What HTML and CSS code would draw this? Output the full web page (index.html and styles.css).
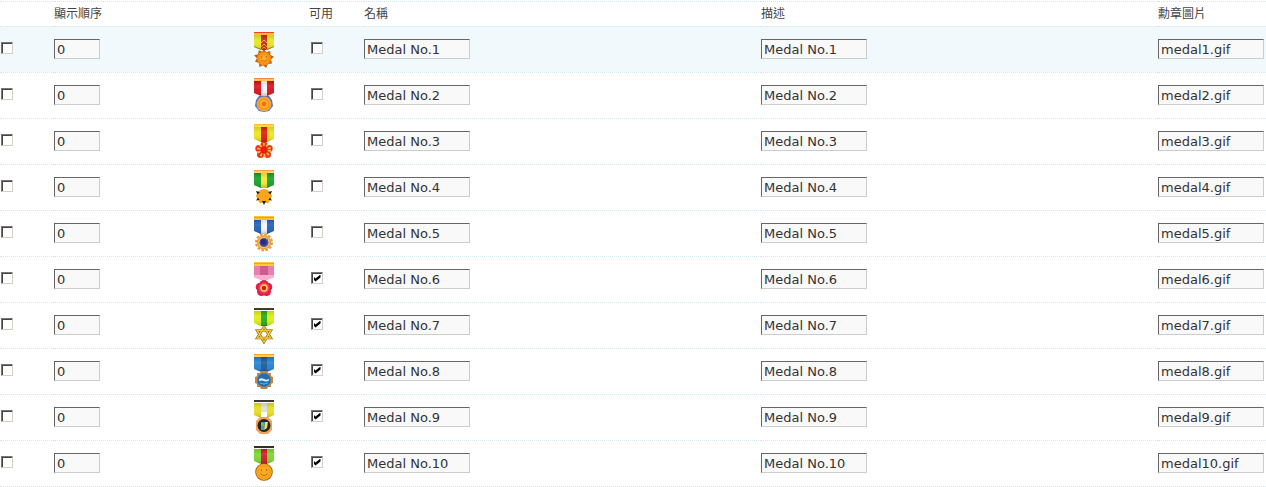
FILE: index.html
```html
<!DOCTYPE html>
<html lang="zh-Hant">
<head>
<meta charset="utf-8">
<title>勳章</title>
<link rel="stylesheet" href="styles.css">
</head>
<body>
<svg class="defs" aria-hidden="true">
  <defs>
    <linearGradient id="shade" x1="0" y1="0" x2="0" y2="1">
      <stop offset="0" stop-color="#000" stop-opacity=".1"/>
      <stop offset=".35" stop-color="#fff" stop-opacity=".12"/>
      <stop offset=".6" stop-color="#fff" stop-opacity=".05"/>
      <stop offset="1" stop-color="#000" stop-opacity=".22"/>
    </linearGradient>
    <radialGradient id="gold"><stop offset="0" stop-color="#ffb52e"/><stop offset="1" stop-color="#f0860c"/></radialGradient>
    <path id="ribbon" d="M0 3H20V15L13 18H7L0 15Z"/>
    <path id="stripe" d="M7 3h6v15H7z"/>
    <path id="burst" d="M10 17l2.400 3.200 3.900-1.200.1 4 3.600 1.800-3 2.800 1 4-4.100.3-1.800 4.100-3-2.700-3.600 1.700-.7-4L1 29.500l1.900-3.300L0 23.300l4-1.100.8-3.900 3.300 1.200z"/>
  </defs>
</svg>
<table class="medals">
  <colgroup><col class="c-check"><col class="c-order"><col class="c-icon"><col class="c-use"><col><col><col class="c-file"></colgroup>
  <thead>
    <tr><th></th><th>顯示順序</th><th></th><th>可用</th><th>名稱</th><th>描述</th><th>勳章圖片</th></tr>
  </thead>
  <tbody>
    <tr class="active">
      <td><input class="check" type="checkbox" aria-label="選擇 1"></td>
      <td><input class="text short" type="text" value="0" aria-label="顯示順序 1"></td>
      <td><svg class="medal" viewBox="0 0 20 36"><use href="#ribbon" fill="#e8e21c"/><path fill="#8f9a12" d="M0 14l7 3v1l-7-3zM20 14l-7 3v1l7-3z"/><use href="#stripe" fill="#cf2412"/><path d="M7 11l3-3 3 3M7 15l3-3 3 3M7 18l3-3 3 3" fill="none" stroke="#f6a83e"/><use href="#ribbon" fill="url(#shade)"/><path fill="#f0402c" d="M0 0h20v1H0z"/><path fill="#ffbf35" d="M0 1h20v2H0z"/><use href="#burst" fill="#bd6112"/><circle cx="10" cy="26.500" r="7" fill="url(#gold)"/><path d="M7.500 24v2M12.500 24v2M7 28q3 3 6 0" fill="none" stroke="#dc720f"/></svg></td>
      <td><input class="check use" type="checkbox" aria-label="可用 1"></td>
      <td><input class="text" type="text" value="Medal No.1" aria-label="名稱 1"></td>
      <td><input class="text" type="text" value="Medal No.1" aria-label="描述 1"></td>
      <td><input class="text" type="text" value="medal1.gif" aria-label="勳章圖片 1"></td>
    </tr>
    <tr>
      <td><input class="check" type="checkbox" aria-label="選擇 2"></td>
      <td><input class="text short" type="text" value="0" aria-label="顯示順序 2"></td>
      <td><svg class="medal" viewBox="0 0 20 36"><use href="#ribbon" fill="#d80f18"/><use href="#stripe" fill="#f4f4f6"/><use href="#ribbon" fill="url(#shade)"/><path fill="#f5863f" d="M0 0h20v1H0z"/><path fill="#ffc943" d="M0 1h20v2H0z"/><path fill="#5471b9" d="M5 18h10l3 4 1 6-4 5-5 1-5-1-4-5 1-6z"/><circle cx="10" cy="26" r="7.500" fill="#e9a25c"/><circle cx="10" cy="26" r="6" fill="#f79b17"/><circle cx="10" cy="26" r="4" fill="#ffad28"/><circle cx="10" cy="26" r="2.200" fill="#ef7014"/></svg></td>
      <td><input class="check use" type="checkbox" aria-label="可用 2"></td>
      <td><input class="text" type="text" value="Medal No.2" aria-label="名稱 2"></td>
      <td><input class="text" type="text" value="Medal No.2" aria-label="描述 2"></td>
      <td><input class="text" type="text" value="medal2.gif" aria-label="勳章圖片 2"></td>
    </tr>
    <tr>
      <td><input class="check" type="checkbox" aria-label="選擇 3"></td>
      <td><input class="text short" type="text" value="0" aria-label="顯示順序 3"></td>
      <td><svg class="medal" viewBox="0 0 20 36"><use href="#ribbon" fill="#efe01c"/><use href="#stripe" fill="#e01b0b"/><use href="#ribbon" fill="url(#shade)"/><path fill="#f9b938" d="M0 0h20v1H0z"/><path fill="#ffd64c" d="M0 1h20v2H0z"/><g fill="#e93415"><circle cx="10" cy="21" r="3.500"/><circle cx="15.200" cy="24.500" r="3.500"/><circle cx="13.500" cy="30.500" r="3.500"/><circle cx="6.500" cy="30.500" r="3.500"/><circle cx="4.800" cy="24.500" r="3.500"/></g><circle cx="10" cy="26" r="5" fill="none" stroke="#ffb850" stroke-width="4" stroke-dasharray="1.570"/><circle cx="10" cy="26" r="3.700" fill="#ed1d0c"/></svg></td>
      <td><input class="check use" type="checkbox" aria-label="可用 3"></td>
      <td><input class="text" type="text" value="Medal No.3" aria-label="名稱 3"></td>
      <td><input class="text" type="text" value="Medal No.3" aria-label="描述 3"></td>
      <td><input class="text" type="text" value="medal3.gif" aria-label="勳章圖片 3"></td>
    </tr>
    <tr>
      <td><input class="check" type="checkbox" aria-label="選擇 4"></td>
      <td><input class="text short" type="text" value="0" aria-label="顯示順序 4"></td>
      <td><svg class="medal" viewBox="0 0 20 36"><use href="#ribbon" fill="#12a024"/><use href="#stripe" fill="#f4e62b"/><use href="#ribbon" fill="url(#shade)"/><path fill="#f5a338" d="M0 0h20v1H0z"/><path fill="#ffd073" d="M0 1h20v2H0z"/><circle cx="10" cy="26" r="7" fill="#fba51a"/><circle cx="4" cy="26" r="2" fill="#fba51a"/><circle cx="16" cy="26" r="2" fill="#fba51a"/><circle cx="6.500" cy="31" r="2" fill="#fba51a"/><circle cx="13.500" cy="31" r="2" fill="#fba51a"/><path fill="#241e12" d="M2 21l4 1-2.500 2.500zM18 21l-4 1 2.500 2.500zM8 31h4l-2 4zM2 30.500l2-3 1.500 2.500zM18 30.500l-2-3-1.500 2.500z"/></svg></td>
      <td><input class="check use" type="checkbox" aria-label="可用 4"></td>
      <td><input class="text" type="text" value="Medal No.4" aria-label="名稱 4"></td>
      <td><input class="text" type="text" value="Medal No.4" aria-label="描述 4"></td>
      <td><input class="text" type="text" value="medal4.gif" aria-label="勳章圖片 4"></td>
    </tr>
    <tr>
      <td><input class="check" type="checkbox" aria-label="選擇 5"></td>
      <td><input class="text short" type="text" value="0" aria-label="顯示順序 5"></td>
      <td><svg class="medal" viewBox="0 0 20 36"><use href="#ribbon" fill="#205db7"/><use href="#stripe" fill="#f4f6fb"/><use href="#ribbon" fill="url(#shade)"/><path fill="#ffc226" d="M0 0h20v4H0z"/><path fill="#e5a51d" d="M0 1h20v1H0z"/><circle cx="10" cy="26.500" r="8" fill="none" stroke="#e39a32" stroke-width="2" stroke-dasharray="2.590 1.600"/><circle cx="10" cy="26.500" r="7.200" fill="#e8a13a"/><circle cx="10" cy="26.500" r="5.500" fill="#ffc879"/><circle cx="10" cy="26.500" r="4.500" fill="#4a4d9c"/><circle cx="9.500" cy="26" r="3" fill="#262d86"/></svg></td>
      <td><input class="check use" type="checkbox" aria-label="可用 5"></td>
      <td><input class="text" type="text" value="Medal No.5" aria-label="名稱 5"></td>
      <td><input class="text" type="text" value="Medal No.5" aria-label="描述 5"></td>
      <td><input class="text" type="text" value="medal5.gif" aria-label="勳章圖片 5"></td>
    </tr>
    <tr>
      <td><input class="check" type="checkbox" aria-label="選擇 6"></td>
      <td><input class="text short" type="text" value="0" aria-label="顯示順序 6"></td>
      <td><svg class="medal" viewBox="0 0 20 36"><use href="#ribbon" fill="#e87fae"/><path fill="#cf5c8e" d="M6 4h8v9H6z"/><path fill="#f7b0d3" d="M0 13h20v2l-7 3H7l-7-3z"/><path fill="#ffc93a" d="M0 0h20v4H0z"/><path fill="#eda236" d="M0 1h20v1H0z"/><g fill="#e21d4a"><circle cx="10" cy="22.500" r="4.500"/><circle cx="14" cy="25" r="4.300"/><circle cx="12.500" cy="29.500" r="4.500"/><circle cx="7.500" cy="29.500" r="4.500"/><circle cx="6" cy="25" r="4.300"/></g><circle cx="10" cy="26" r="5.500" fill="#f53c62"/><circle cx="10" cy="26" r="3.800" fill="#ffd34d"/><circle cx="10" cy="26" r="2.200" fill="#d91919"/></svg></td>
      <td><input class="check use" type="checkbox" checked aria-label="可用 6"></td>
      <td><input class="text" type="text" value="Medal No.6" aria-label="名稱 6"></td>
      <td><input class="text" type="text" value="Medal No.6" aria-label="描述 6"></td>
      <td><input class="text" type="text" value="medal6.gif" aria-label="勳章圖片 6"></td>
    </tr>
    <tr>
      <td><input class="check" type="checkbox" aria-label="選擇 7"></td>
      <td><input class="text short" type="text" value="0" aria-label="顯示順序 7"></td>
      <td><svg class="medal" viewBox="0 0 20 36"><use href="#ribbon" fill="#dcec10"/><use href="#stripe" fill="#26a91b"/><use href="#ribbon" fill="url(#shade)"/><path fill="#433830" d="M0 0h20v2H0z"/><path fill="#fff" d="M0 2h20v1H0z"/><path d="M10 19l6.800 11H3.200zM10 34L3.200 22.500h13.600z" fill="none" stroke="#8b681b" stroke-width="2.600"/><path d="M10 19l6.800 11H3.200zM10 34L3.200 22.500h13.600z" fill="none" stroke="#f2c83a" stroke-width="1.400"/></svg></td>
      <td><input class="check use" type="checkbox" checked aria-label="可用 7"></td>
      <td><input class="text" type="text" value="Medal No.7" aria-label="名稱 7"></td>
      <td><input class="text" type="text" value="Medal No.7" aria-label="描述 7"></td>
      <td><input class="text" type="text" value="medal7.gif" aria-label="勳章圖片 7"></td>
    </tr>
    <tr>
      <td><input class="check" type="checkbox" aria-label="選擇 8"></td>
      <td><input class="text short" type="text" value="0" aria-label="顯示順序 8"></td>
      <td><svg class="medal" viewBox="0 0 20 36"><use href="#ribbon" fill="#217fd2"/><use href="#stripe" fill="#195a99"/><use href="#ribbon" fill="url(#shade)"/><path fill="#f9a42c" d="M0 0h20v1H0z"/><path fill="#ffd05e" d="M0 1h20v2H0z"/><path fill="#b9874d" d="M7 17h6l1 2 3 0 0 3 2 1v6l-2 1v3l-3 0-1 2H7l-1-2H3v-3l-2-1v-6l2-1v-3h3z"/><circle cx="10" cy="26" r="6.700" fill="#1f6fb2"/><path d="M5 25q2.500-1.500 5 0t5 0v1.500q-3 1.500-5 .500t-5 0z" fill="#dff5ff"/><path d="M6 29q4 2 8 0" fill="none" stroke="#5eb1e0"/></svg></td>
      <td><input class="check use" type="checkbox" checked aria-label="可用 8"></td>
      <td><input class="text" type="text" value="Medal No.8" aria-label="名稱 8"></td>
      <td><input class="text" type="text" value="Medal No.8" aria-label="描述 8"></td>
      <td><input class="text" type="text" value="medal8.gif" aria-label="勳章圖片 8"></td>
    </tr>
    <tr>
      <td><input class="check" type="checkbox" aria-label="選擇 9"></td>
      <td><input class="text short" type="text" value="0" aria-label="顯示順序 9"></td>
      <td><svg class="medal" viewBox="0 0 20 36"><use href="#ribbon" fill="#e6dc1c"/><use href="#stripe" fill="#d8dddc"/><use href="#ribbon" fill="url(#shade)"/><path fill="#fff" d="M7 12h6v6H7z"/><path fill="#39372e" d="M0 0h20v2H0z"/><path fill="#fff" d="M0 2h20v1H0z"/><path fill="#f2a35a" d="M6 17h8l4 4v9l-4 4H6l-4-4v-9z"/><circle cx="10" cy="25.500" r="6.500" fill="#24252b"/><path fill="#3c9ccc" d="M7 22h4l-1 8H7z"/><path fill="#f5df52" d="M11 22h3l-1 6-3 2z"/><path fill="#6ebf4a" d="M7 23h3v3H7z"/></svg></td>
      <td><input class="check use" type="checkbox" checked aria-label="可用 9"></td>
      <td><input class="text" type="text" value="Medal No.9" aria-label="名稱 9"></td>
      <td><input class="text" type="text" value="Medal No.9" aria-label="描述 9"></td>
      <td><input class="text" type="text" value="medal9.gif" aria-label="勳章圖片 9"></td>
    </tr>
    <tr>
      <td><input class="check" type="checkbox" aria-label="選擇 10"></td>
      <td><input class="text short" type="text" value="0" aria-label="顯示順序 10"></td>
      <td><svg class="medal" viewBox="0 0 20 36"><use href="#ribbon" fill="#79d52c"/><use href="#stripe" fill="#d01824"/><use href="#ribbon" fill="url(#shade)"/><path fill="#30322b" d="M0 0h20v2H0z"/><path fill="#fff" d="M0 2h20v1H0z"/><circle cx="10" cy="26" r="8.800" fill="#a86008"/><circle cx="10" cy="26" r="7.900" fill="#fdab22"/><circle cx="10" cy="26" r="6" fill="none" stroke="#ee9a16"/><path d="M7.500 23v2M12.500 23v2M6.500 27.500q3.500 4 7 0" fill="none" stroke="#bd6b0b"/></svg></td>
      <td><input class="check use" type="checkbox" checked aria-label="可用 10"></td>
      <td><input class="text" type="text" value="Medal No.10" aria-label="名稱 10"></td>
      <td><input class="text" type="text" value="Medal No.10" aria-label="描述 10"></td>
      <td><input class="text" type="text" value="medal10.gif" aria-label="勳章圖片 10"></td>
    </tr>
  </tbody>
</table>
</body>
</html>
```
FILE: styles.css
```css
* {
  box-sizing: border-box;
}

body {
  margin: 0;
  padding-top: 1px;
  background: #fff;
  color: #444;
  font-family: "DejaVu Sans", "Noto Sans CJK TC", sans-serif;
  font-size: 12px;
}

.defs {
  position: absolute;
  width: 0;
  height: 0;
}

.medals {
  width: 100%;
  table-layout: fixed;
  border-collapse: separate;
  border-spacing: 0;
  border-bottom: 1px dotted #d2e6ee;
}

.c-check { width: 54px; }
.c-order { width: 200px; }
.c-icon,
.c-use { width: 55px; }
.c-file { width: 108px; }

th,
td {
  padding: 0;
  border-top: 1px dotted #d2e6ee;
  text-align: left;
  vertical-align: middle;
}

th {
  height: 25px;
  font-weight: normal;
  line-height: 16px;
}

td {
  height: 46px;
}

.active td {
  background: #f2f9fd;
}

.medal {
  display: block;
  width: 20px;
  height: 36px;
}

.text {
  display: block;
  width: 106px;
  height: 20px;
  margin: 0 0 1px;
  padding: 1px 2px 0;
  border: 1px solid;
  border-color: #666 #ccc #ccc #666;
  border-radius: 0;
  background: #f9f9f9;
  color: #333;
  font-family: "DejaVu Sans", sans-serif;
  font-size: 13px;
}

.short {
  width: 46px;
}

.check {
  appearance: none;
  display: grid;
  place-items: center;
  width: 12px;
  height: 12px;
  margin: 0 0 3px 1px;
  border: 1px solid;
  border-color: #777 #d4d0c8 #d4d0c8 #777;
  background: #fff;
  box-shadow: inset 1px 1px #444;
}

.use {
  margin-left: 2px;
}

.check:checked::after {
  content: "";
  width: 7px;
  height: 7px;
  background: #000;
  clip-path: polygon(0 2px, 2px 4px, 7px 0, 7px 3px, 2px 7px, 0 5px);
}
```
